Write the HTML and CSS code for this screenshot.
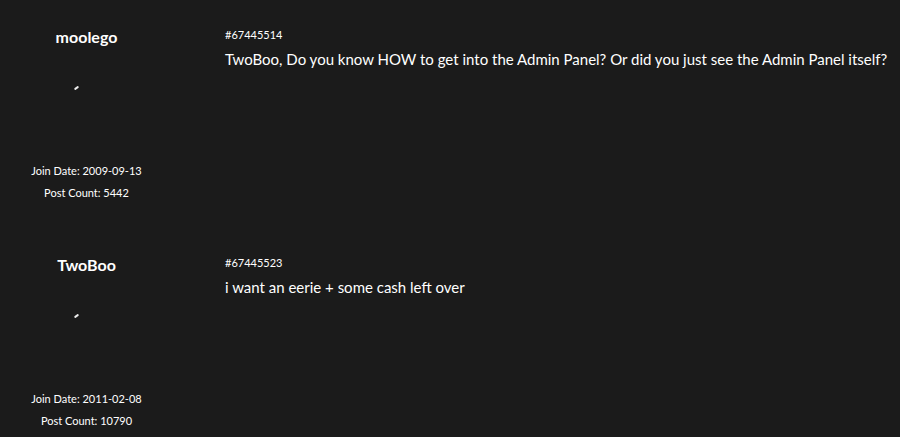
FILE: index.html
```html
<!DOCTYPE html>
<html>
<head>
<meta charset="utf-8">
<link rel="stylesheet" href="styles.css">
</head>
<body>
<div class="post">
  <div class="user">
    <div class="name">moolego</div>
    <div class="avatar"><span class="dot"></span></div>
    <div class="meta">Join Date: 2009-09-13</div>
    <div class="meta">Post Count: 5442</div>
  </div>
  <div class="content">
    <div class="id">#67445514</div>
    <div class="text">TwoBoo, Do you know HOW to get into the Admin Panel? Or did you just see the Admin Panel itself?</div>
  </div>
</div>
<div class="post">
  <div class="user">
    <div class="name">TwoBoo</div>
    <div class="avatar"><span class="dot"></span></div>
    <div class="meta">Join Date: 2011-02-08</div>
    <div class="meta">Post Count: 10790</div>
  </div>
  <div class="content">
    <div class="id">#67445523</div>
    <div class="text">i want an eerie + some cash left over</div>
  </div>
</div>
</body>
</html>
```
FILE: styles.css
```css
html, body {
  margin: 0;
  padding: 0;
  background: #1b1b1b;
  color: #ffffff;
  font-family: "Lato", "Noto Sans", sans-serif;
}
.post {
  display: flex;
  height: 228px;
  padding-top: 27px;
  box-sizing: border-box;
}
.user {
  flex: none;
  width: 173px;
  text-align: center;
  display: flex;
  flex-direction: column;
  align-items: center;
}
.name {
  font-weight: bold;
  font-size: 16px;
  line-height: 20px;
}
.avatar {
  height: 113px;
  width: 100%;
  position: relative;
}
.dot {
  position: absolute;
  left: 74px;
  top: 40px;
  width: 5px;
  height: 2px;
  background: #ececec;
  border-radius: 1px;
  transform: rotate(-35deg);
}
.meta {
  font-size: 11px;
  font-weight: 400;
  line-height: 22px;
}
.content {
  margin-left: 52px;
  white-space: nowrap;
}
.id {
  font-size: 11px;
  line-height: 16px;
}
.text {
  font-size: 15px;
  line-height: 20px;
  margin-top: 6px;
}
```
